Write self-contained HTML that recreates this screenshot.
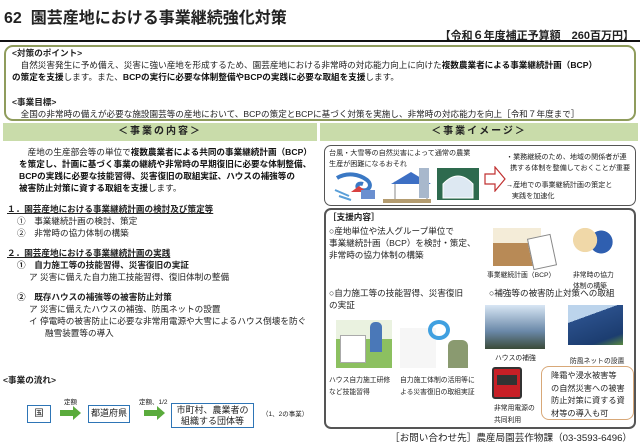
<!DOCTYPE html>
<html><head><meta charset="utf-8"><style>
*{margin:0;padding:0;box-sizing:border-box}
body{width:640px;height:443px;background:#fff;position:relative;overflow:hidden;font-family:"Liberation Sans","Noto Sans CJK JP",sans-serif;color:#222}
.a{position:absolute;white-space:nowrap}
b{font-weight:bold;color:#111}
.t{font-size:8.6px;line-height:12px}
.s{font-size:7.1px;line-height:11px}
.m{font-size:8.6px;line-height:12px}
.hd{position:absolute;top:123px;height:18px;background:#c9dcaa;font-size:10px;font-weight:bold;text-align:center;line-height:18px;letter-spacing:2px}
.box{position:absolute;border:1.5px solid #555;border-radius:7px}
.p{position:absolute}
.fb{position:absolute;border:1.5px solid #2e75b6;background:#fff;font-size:9px;text-align:center}
</style></head><body>
<div class="a" style="left:4px;top:4px;font-size:16px;font-weight:bold">62&nbsp; 園芸産地における事業継続強化対策</div>
<div class="a" style="right:6px;top:27px;font-size:11px;font-weight:bold">【令和６年度補正予算額　260百万円】</div>
<div class="p" style="left:0;top:40px;width:640px;height:2px;background:#111"></div>
<div class="p" style="left:4px;top:45px;width:632px;height:76px;border:2px solid #8f9c5c;border-radius:9px"></div>
<div class="a t" style="left:12px;top:47px;font-weight:bold">&lt;対策のポイント&gt;</div>
<div class="a t" style="left:12px;top:59px">　自然災害発生に予め備え、災害に強い産地を形成するため、園芸産地における非常時の対応能力向上に向けた<b>複数農業者による事業継続計画（BCP）</b></div>
<div class="a t" style="left:12px;top:71px"><b>の策定を支援</b>します。また、<b>BCPの実行に必要な体制整備やBCPの実践に必要な取組を支援</b>します。</div>
<div class="a t" style="left:12px;top:96px;font-weight:bold">&lt;事業目標&gt;</div>
<div class="a t" style="left:12px;top:108px">　全国の非常時の備えが必要な施設園芸等の産地において、BCPの策定とBCPに基づく対策を実施し、非常時の対応能力を向上［令和７年度まで］</div>

<div class="hd" style="left:3px;width:314px">＜事業の内容＞</div>
<div class="hd" style="left:320px;width:318px">＜事業イメージ＞</div>

<div class="a t" style="left:19px;top:146px">　産地の生産部会等の単位で<b>複数農業者による共同の事業継続計画（BCP）</b></div>
<div class="a t" style="left:19px;top:158px"><b>を策定し、計画に基づく事業の継続や非常時の早期復旧に必要な体制整備、</b></div>
<div class="a t" style="left:19px;top:170px"><b>BCPの実践に必要な技能習得、災害復旧の取組実証、ハウスの補強等の</b></div>
<div class="a t" style="left:19px;top:182px"><b>被害防止対策に資する取組を支援</b>します。</div>
<div class="a t" style="left:7px;top:203px;font-weight:bold;text-decoration:underline">１．園芸産地における事業継続計画の検討及び策定等</div>
<div class="a t" style="left:17px;top:215px">①　事業継続計画の検討、策定</div>
<div class="a t" style="left:17px;top:227px">②　非常時の協力体制の構築</div>
<div class="a t" style="left:7px;top:247px;font-weight:bold;text-decoration:underline">２．園芸産地における事業継続計画の実践</div>
<div class="a t" style="left:17px;top:259px;font-weight:bold">①　自力施工等の技能習得、災害復旧の実証</div>
<div class="a t" style="left:29px;top:271px">ア  災害に備えた自力施工技能習得、復旧体制の整備</div>
<div class="a t" style="left:17px;top:291px;font-weight:bold">②　既存ハウスの補強等の被害防止対策</div>
<div class="a t" style="left:29px;top:303px">ア  災害に備えたハウスの補強、防風ネットの設置</div>
<div class="a t" style="left:29px;top:315px">イ  停電時の被害防止に必要な非常用電源や大雪によるハウス倒壊を防ぐ</div>
<div class="a t" style="left:45px;top:327px">融雪装置等の導入</div>
<div class="a t" style="left:3px;top:374px;font-weight:bold">&lt;事業の流れ&gt;</div>
<div class="a" style="left:64px;top:396px;font-size:6.5px">定額</div>
<div class="a" style="left:139px;top:396px;font-size:6.5px">定額、1/2</div>
<div class="fb" style="left:27px;top:405px;width:24px;height:18px;line-height:15px">国</div>
<div class="fb" style="left:88px;top:405px;width:42px;height:18px;line-height:15px">都道府県</div>
<div class="fb" style="left:171px;top:403px;width:83px;height:25px;line-height:11px;padding-top:1px">市町村、農業者の<br>組織する団体等</div>
<div class="a" style="left:262px;top:408px;font-size:6.5px">（1、2の事業）</div>
<svg style="position:absolute;left:60px;top:406px" width="22" height="14"><path d="M0 4h13V0l8 7-8 7v-4H0z" fill="#5aab3c"/></svg>
<svg style="position:absolute;left:144px;top:406px" width="22" height="14"><path d="M0 4h13V0l8 7-8 7v-4H0z" fill="#5aab3c"/></svg>

<div class="box" style="left:324px;top:145px;width:312px;height:61px"></div>
<div class="a s" style="left:329px;top:148px">台風・大雪等の自然災害によって通常の農業<br>生産が困難になるおそれ</div>
<svg class="p" style="left:333px;top:168px" width="150" height="36">
<path d="M4 10c10-6 22-4 30 2 6 5 2 12-6 10-6-2-4-8 2-6" stroke="#3a78c4" stroke-width="4" fill="none"/>
<path d="M2 22l14 6M6 28l12 4" stroke="#5a9fd8" stroke-width="2"/>
<path d="M18 24l8-6 8 6z" fill="#d84040"/><rect x="28" y="22" width="14" height="9" fill="#6a8fd0"/>
<rect x="62" y="14" width="32" height="18" fill="#fff" stroke="#888"/><path d="M58 16l20-12 20 12z" fill="#3d6fc4"/>
<rect x="86" y="0" width="10" height="30" fill="#a8b8cc"/><rect x="50" y="31" width="48" height="4" fill="#b49c70"/>
<rect x="104" y="0" width="42" height="32" fill="#2e6a4e"/><path d="M110 30v-14q15-16 30 0v14z" fill="#dde8f2" stroke="#fff"/>
</svg>
<svg class="p" style="left:484px;top:166px" width="22" height="26"><path d="M1 8h10V1l10 12-10 12v-7H1z" fill="#fff" stroke="#c03030" stroke-width="1.2"/></svg>
<div class="a s" style="left:506px;top:152px">・業務継続のため、地域の関係者が連<br>&nbsp;&nbsp;携する体制を整備しておくことが重要</div>
<div class="a s" style="left:506px;top:180px">→産地での事業継続計画の策定と<br>&nbsp;&nbsp;&nbsp;実践を加速化</div>

<div class="box" style="left:324px;top:208px;width:312px;height:221px;border-width:2px"></div>
<div class="a m" style="left:328px;top:211px;font-weight:bold">［支援内容］</div>
<div class="a m" style="left:329px;top:225px">○産地単位や法人グループ単位で<br>事業継続計画（BCP）を検討・策定、<br>非常時の協力体制の構築</div>
<div class="p" style="left:493px;top:228px;width:48px;height:38px;background:linear-gradient(#f4ecd8 40%,#b88a56 40%)"></div>
<div class="p" style="left:530px;top:236px;width:24px;height:32px;background:#fff;border:1px solid #888;transform:rotate(-12deg)"></div>
<div class="a" style="left:487px;top:269px;font-size:6.8px">事業継続計画（BCP）</div>
<div class="p" style="left:569px;top:226px;width:46px;height:40px;background:radial-gradient(circle at 35% 35%,#f0d8a8 30%,transparent 31%),radial-gradient(circle at 70% 40%,#2f5fb0 28%,transparent 29%)"></div>
<div class="a" style="left:573px;top:270px;font-size:6.8px;line-height:11px">非常時の協力<br>体制の構築</div>

<div class="a m" style="left:329px;top:287px">○自力施工等の技能習得、災害復旧<br>の実証</div>
<div class="a m" style="left:489px;top:287px">○補強等の被害防止対策への取組</div>
<div class="p" style="left:336px;top:320px;width:56px;height:48px;background:linear-gradient(#eaf2e0 40%,#8cc060 40%)"></div>
<div class="p" style="left:340px;top:335px;width:26px;height:28px;border:1px solid #aaa;background:#fff"></div>
<div class="p" style="left:370px;top:322px;width:12px;height:30px;background:#4a78b8;border-radius:5px 5px 0 0"></div>
<div class="p" style="left:400px;top:328px;width:72px;height:40px;background:linear-gradient(90deg,#f6f6f6 50%,#fff 50%)"></div>
<div class="p" style="left:428px;top:320px;width:22px;height:20px;border:4px solid #40a0e0;border-radius:50%"></div>
<div class="p" style="left:448px;top:340px;width:20px;height:28px;background:#8a9a70;border-radius:6px 6px 0 0"></div>
<div class="a" style="left:329px;top:375px;font-size:6.8px;line-height:12px">ハウス自力施工研修<br>など技能習得</div>
<div class="a" style="left:400px;top:375px;font-size:6.8px;line-height:12px">自力施工体制の活用等に<br>よる災害復旧の取組実証</div>
<div class="p" style="left:485px;top:305px;width:60px;height:44px;background:linear-gradient(#d8e6f4,#6a88a8 60%,#3a4a38)"></div>
<div class="p" style="left:568px;top:305px;width:55px;height:40px;background:linear-gradient(160deg,#bcd4ec 30%,#2a4f8a 30%,#1c3d70 80%,#5a8a40)"></div>
<div class="a" style="left:495px;top:352px;font-size:6.8px">ハウスの補強</div>
<div class="a" style="left:570px;top:355px;font-size:6.8px">防風ネットの設置</div>
<div class="p" style="left:492px;top:367px;width:30px;height:32px;background:#c81f26;border:2px solid #333;border-radius:3px"></div>
<div class="p" style="left:497px;top:375px;width:20px;height:10px;background:#333"></div>
<div class="a" style="left:494px;top:403px;font-size:6.8px;line-height:12px">非常用電源の<br>共同利用</div>
<div class="p" style="left:541px;top:366px;width:93px;height:54px;border:1.5px solid #d8a878;border-radius:8px"></div>
<div class="a" style="left:551px;top:370px;font-size:8.2px;line-height:12.5px">降霜や浸水被害等<br>の自然災害への被害<br>防止対策に資する資<br>材等の導入も可</div>

<div class="a" style="left:390px;top:430px;font-size:9.6px">［お問い合わせ先］農産局園芸作物課（03-3593-6496）</div>
</body></html>
